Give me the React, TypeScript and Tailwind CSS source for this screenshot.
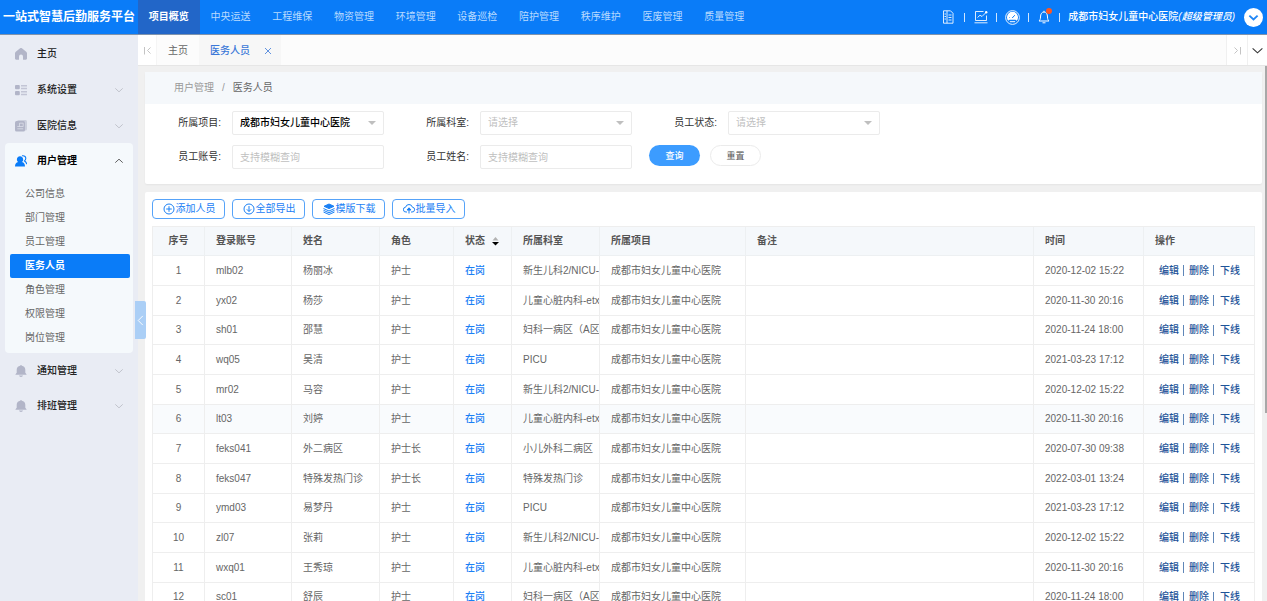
import { clsx } from "clsx";

const NAV = ["项目概览", "中央运送", "工程维保", "物资管理", "环境管理", "设备巡检", "陪护管理", "秩序维护", "医废管理", "质量管理"];
const SUB_MENU = ["公司信息", "部门管理", "员工管理", "医务人员", "角色管理", "权限管理", "岗位管理"];
const HOSPITAL = "成都市妇女儿童中心医院";
const HOVERED_ROW = 5;

const ROWS = [
  { account: "mlb02", name: "杨丽冰", role: "护士", dept: "新生儿科2/NICU-2", time: "2020-12-02 15:22" },
  { account: "yx02", name: "杨莎", role: "护士", dept: "儿童心脏内科-etxznk", time: "2020-11-30 20:16" },
  { account: "sh01", name: "邵慧", role: "护士", dept: "妇科一病区（A区）", time: "2020-11-24 18:00" },
  { account: "wq05", name: "吴清", role: "护士", dept: "PICU", time: "2021-03-23 17:12" },
  { account: "mr02", name: "马容", role: "护士", dept: "新生儿科2/NICU-2", time: "2020-12-02 15:22" },
  { account: "lt03", name: "刘婷", role: "护士", dept: "儿童心脏内科-etxznk", time: "2020-11-30 20:16" },
  { account: "feks041", name: "外二病区", role: "护士长", dept: "小儿外科二病区", time: "2020-07-30 09:38" },
  { account: "feks047", name: "特殊发热门诊", role: "护士长", dept: "特殊发热门诊", time: "2022-03-01 13:24" },
  { account: "ymd03", name: "易梦丹", role: "护士", dept: "PICU", time: "2021-03-23 17:12" },
  { account: "zl07", name: "张莉", role: "护士", dept: "新生儿科2/NICU-2", time: "2020-12-02 15:22" },
  { account: "wxq01", name: "王秀琼", role: "护士", dept: "儿童心脏内科-etxznk", time: "2020-11-30 20:16" },
  { account: "sc01", name: "舒辰", role: "护士", dept: "妇科一病区（A区）", time: "2020-11-24 18:00" },
];

function Chevron({ dir, className }: { dir: "up" | "down" | "left"; className?: string }) {
  const d = { up: "M1.5 8 6 3.8 10.5 8", down: "M1.5 4 6 8.2 10.5 4", left: "M8.5 1 3.5 6 8.5 11" }[dir];
  return (
    <svg viewBox="0 0 12 12" fill="none" stroke="currentColor" className={clsx("shrink-0", className)}>
      <path d={d} />
    </svg>
  );
}

function HomeIcon() {
  return (
    <svg viewBox="0 0 12 12" fill="currentColor" className="size-3">
      <path d="M5.1.3a1.400 1.400 0 0 1 1.800 0l4.300 3.400c.5.4.8.9.8 1.500v5.400c0 .7-.5 1.200-1.200 1.200H8V8.600a2 2 0 0 0-4 0v3.200H1.200C.5 11.800 0 11.300 0 10.600V5.200c0-.6.3-1.100.8-1.500z" />
    </svg>
  );
}

function SettingsIcon() {
  return (
    <svg viewBox="0 0 12 12" fill="currentColor" className="size-3">
      <rect y="1" width="4.8" height="4.3" rx="1" />
      <rect y="6.9" width="4.8" height="4.3" rx="1" />
      <path opacity=".7" d="M6 1h6v1.4H6zM6 3.8h6v1.4H6zM6 7h6v1.4H6zM6 9.8h6v1.4H6z" />
    </svg>
  );
}

function HospitalIcon() {
  return (
    <svg viewBox="0 0 12 12" fill="currentColor" className="size-3">
      <rect x="2" width="10" height="10.5" rx="1.5" opacity=".5" />
      <rect y="1" width="10" height="10.5" rx="1.5" />
      <path d="M4.5 3.200h3.700v3.300H2.300M4.500 3.200v3.300M2.300 8.800h5.900" stroke="#e9ecf4" strokeWidth=".6" fill="none" />
    </svg>
  );
}

function UserIcon() {
  return (
    <svg viewBox="0 0 12 12" fill="currentColor" className="size-3 text-[#0a7cf8]">
      <path d="M5 1.200c1.900 0 3.200 1.300 3.200 3.200 0 1.100-.5 2-1.200 2.600 1.900.6 3 2 3 4.500H0C0 9 1.200 7.600 3.100 7 2.400 6.400 1.900 5.500 1.900 4.400c0-1.900 1.200-3.200 3.100-3.200z" />
      <path d="M7 .8c2.200-.5 3.800.7 3.800 2.500 0 1.200-.5 2-1.300 2.600 1.200.7 2 1.800 2.300 3.300" fill="none" stroke="currentColor" strokeWidth="1.100" />
    </svg>
  );
}

function BellIcon() {
  return (
    <svg viewBox="0 0 12 12" fill="currentColor" className="size-3">
      <path d="M6 0c.5 0 .8.3.8.8 2.100.4 3.500 1.900 3.500 4v3l1.200 1.400v.6H.5v-.6l1.200-1.400v-3c0-2.100 1.400-3.600 3.500-4C5.200.3 5.500 0 6 0zM4 10.600h4c-.2.800-1 1.300-2 1.300s-1.800-.5-2-1.300z" />
    </svg>
  );
}

function MenuItem({ icon, label, arrow = true, className }: { icon: React.ReactNode; label: string; arrow?: boolean; className?: string }) {
  return (
    <button className={clsx("flex w-full items-center pl-[15px] pr-[14px] text-left font-medium text-[#222]", className)}>
      <span className="mr-[10px] text-[#b2b5c8]">{icon}</span>
      <span className="flex-1">{label}</span>
      {arrow && <Chevron dir="down" className="size-[10px] text-[#b9bcc4]" />}
    </button>
  );
}

function Sidebar() {
  return (
    <aside className="relative w-[138px] shrink-0 bg-[#e9ecf4]">
      <div className="pt-px">
        <MenuItem icon={<HomeIcon />} label="主页" arrow={false} className="h-9" />
        <MenuItem icon={<SettingsIcon />} label="系统设置" className="h-9" />
        <MenuItem icon={<HospitalIcon />} label="医院信息" className="h-[35px]" />
      </div>
      <div className="mx-[5px] rounded-sm bg-[#f5f9fc] pb-[3px]">
        <button className="flex h-[35px] w-full items-center pl-[10px] pr-[9px] text-left font-bold text-black">
          <span className="mr-[10px]"><UserIcon /></span>
          <span className="flex-1">用户管理</span>
          <Chevron dir="up" className="size-[10px] text-[#444]" />
        </button>
        <ul className="pl-[5px] pr-[3px] pt-1">
          {SUB_MENU.map((item) => (
            <li key={item}>
              <a
                href="#"
                className={clsx(
                  "flex h-6 items-center rounded-xs pl-[15px]",
                  item === "医务人员" ? "bg-[#0a7cf8] font-bold text-white" : "text-[#666]"
                )}
              >
                {item}
              </a>
            </li>
          ))}
        </ul>
      </div>
      <MenuItem icon={<BellIcon />} label="通知管理" className="h-[35px]" />
      <MenuItem icon={<BellIcon />} label="排班管理" className="h-9" />
      {/* collapse handle */}
      <button aria-label="收起菜单" className="absolute -right-2 top-[266px] z-10 flex h-[38px] w-[11px] items-center justify-center rounded-r-xs bg-[#abcff6] text-white">
        <Chevron dir="left" className="size-[11px]" />
      </button>
    </aside>
  );
}

function Header() {
  return (
    <header className="flex h-[35px] shrink-0 items-center border-b border-[#7f93ac] bg-[#0a7cf8] text-white">
      <h1 className="w-[138px] shrink-0 whitespace-nowrap text-center text-[12px] font-bold">一站式智慧后勤服务平台</h1>
      <nav className="grid h-full w-[617px] shrink-0 grid-cols-10">
        {NAV.map((item, i) => (
          <a key={item} href="#" className={clsx("flex items-center justify-center", i === 0 ? "bg-[#2266c8] font-bold" : "text-[#b8daff]")}>
            {item}
          </a>
        ))}
      </nav>
      <div className="ml-auto flex items-center whitespace-nowrap pr-1">
        <button aria-label="报表">
          <svg viewBox="0 0 12 14" fill="none" stroke="currentColor" strokeOpacity=".85" className="h-[14px] w-3">
            <path d="M1.500.8h7l2.500 2.500v9.900H1.500zM5 .8v12.400M6.500 5h3M6.500 7.500h3M6.500 10h3M2.500 4h1.500M2.500 6.500h1.500M2.500 9h1.500" />
          </svg>
        </button>
        <span className="ml-[10px] mr-[9px] h-[9px] w-px bg-white/80" />
        <button aria-label="统计">
          <svg viewBox="0 0 14 14" fill="none" stroke="currentColor" strokeOpacity=".85" className="size-[14px]">
            <path d="M9.500 1.500H1.500v9h11V5.500M.5 12.800h13" />
            <path d="M3.500 7.500 6 5.200l2 1.300L12 2.500" />
            <circle cx="12.200" cy="2.200" r="1.200" fill="currentColor" stroke="none" />
          </svg>
        </button>
        <span className="mx-2 h-[9px] w-px bg-white/80" />
        <button aria-label="仪表盘">
          <svg viewBox="0 0 15 15" fill="none" stroke="currentColor" className="size-[15px]">
            <circle cx="7.500" cy="7.500" r="6.900" strokeWidth=".9" />
            <path d="M3.200 10.800a5.500 5.500 0 1 1 8.600 0L10.500 9.800h-6z" fill="currentColor" stroke="none" />
            <path d="M4.800 11.700h5.400" />
            <path d="M7.200 8 9.800 5.200" stroke="#0a7cf8" />
            <path d="M4 7.500h1" stroke="#0a7cf8" strokeWidth=".5" />
          </svg>
        </button>
        <span className="mx-2 h-[9px] w-px bg-white/80" />
        <button aria-label="通知" className="relative">
          <svg viewBox="0 0 14 14" fill="none" stroke="currentColor" className="size-[14px]">
            <path d="M7 .8v1.200M2 11c1-1 1.500-2 1.500-4 0-3 1.300-5 3.500-5s3.500 2 3.500 5c0 2 .5 3 1.500 4zM5.500 12.800h3" />
          </svg>
          <span className="absolute -right-px -top-0.5 size-[6px] rounded-full bg-[#ff5722]" />
        </button>
        <span className="mx-2 h-[9px] w-px bg-white/80" />
        <span className="font-medium">{HOSPITAL}<em>(超级管理员)</em></span>
        <button aria-label="用户菜单" className="ml-[9px] flex size-[19px] items-center justify-center rounded-full bg-white text-[#1f86f5]">
          <Chevron dir="down" className="size-[11px] stroke-2" />
        </button>
      </div>
    </header>
  );
}

function TabBar() {
  return (
    <div className="flex h-[31px] shrink-0 items-center border-b border-[#e6e6e6] bg-[#fcfcfc] text-[#666]">
      <button aria-label="第一页" className="flex h-full w-[18px] items-center justify-center bg-white text-[#c4c4c4]">
        <svg viewBox="0 0 9 9" fill="none" stroke="currentColor" className="size-[9px]"><path d="M1.500 1v7.500M7.500 1.500l-3 3 3 3" /></svg>
      </button>
      <button className="h-full w-[43px] border-l border-[#f5f5f5] pt-px">主页</button>
      <div className="flex h-full w-[82px] items-center bg-[#f7f7f7] pl-[11px] pt-px text-[#3b78d8]">
        <button className="font-medium">医务人员</button>
        <button aria-label="关闭" className="ml-[14px]">
          <svg viewBox="0 0 8 8" fill="none" stroke="currentColor" strokeWidth=".8" className="size-2"><path d="m1 1 6 6M7 1 1 7" /></svg>
        </button>
      </div>
      <button aria-label="最后一页" className="ml-auto flex h-full w-[21px] items-center justify-center border-l border-[#f0f0f0] bg-white text-[#c4c4c4]">
        <svg viewBox="0 0 9 9" fill="none" stroke="currentColor" className="size-[9px]"><path d="M7.500 1v7.500M1.500 1.500l3 3-3 3" /></svg>
      </button>
      <button aria-label="更多标签" className="flex h-full w-5 items-center justify-center border-l border-[#f0f0f0] bg-white text-[#333]">
        <Chevron dir="down" className="size-[13px]" />
      </button>
    </div>
  );
}

const FIELD = "h-6 w-[152px] rounded-xs border border-[#ebebeb] bg-white pl-[7px] outline-none placeholder:text-[#bfbfbf]";

function SelectField({ id, label, value }: { id: string; label: string; value?: string }) {
  return (
    <div className="flex items-center gap-[11px]">
      <label htmlFor={id} className="w-[73px] text-right text-[#333]">{label}:</label>
      <div className="relative">
        <select id={id} className={clsx(FIELD, "appearance-none", value ? "font-medium text-black" : "text-[#bfbfbf]")}>
          <option>{value || "请选择"}</option>
        </select>
        <span className="pointer-events-none absolute right-2 top-[10px] border-x-4 border-t-4 border-x-transparent border-t-[#bfbfbf]" />
      </div>
    </div>
  );
}

function TextField({ id, label }: { id: string; label: string }) {
  return (
    <div className="flex items-center gap-[11px]">
      <label htmlFor={id} className="w-[73px] text-right text-[#333]">{label}:</label>
      <input id={id} placeholder="支持模糊查询" className={FIELD} />
    </div>
  );
}

function SearchCard() {
  return (
    <section className="rounded-xs bg-white pb-[15px] shadow-xs">
      <div className="flex h-8 items-center gap-2 bg-[#f5f8fb] pl-[29px] text-[#999]">
        <a href="#">用户管理</a>
        <span>/</span>
        <span className="text-[#666]">医务人员</span>
      </div>
      <form className="grid grid-cols-[236px_236px_236px] gap-x-3 gap-y-[10px] pl-[3px] pt-[7px]" onSubmit={(e) => e.preventDefault()}>
        <SelectField id="project" label="所属项目" value={HOSPITAL} />
        <SelectField id="dept" label="所属科室" />
        <SelectField id="status" label="员工状态" />
        <TextField id="account" label="员工账号" />
        <TextField id="name" label="员工姓名" />
        <div className="flex items-start gap-[10px] pl-[5px]">
          <button type="submit" className="h-[21px] w-[51px] rounded-full bg-[#3c9cff] text-[9px] font-medium text-white">查询</button>
          <button type="reset" className="h-[21px] w-[51px] rounded-full border border-[#ebebeb] bg-white text-[9px] text-[#555]">重置</button>
        </div>
      </form>
    </section>
  );
}

const TOOLS = [
  { label: "添加人员", icon: <><circle cx="6" cy="6" r="5" /><path d="M6 3.200v5.600M3.200 6h5.600" /></> },
  { label: "全部导出", icon: <><circle cx="6" cy="6" r="5" /><path d="M6 3v5.500M3.800 6.300 6 8.500l2.200-2.200" /></> },
  {
    label: "模版下载",
    icon: (
      <>
        <path d="M6 1 11 3.300 6 5.600 1 3.300z" fill="currentColor" />
        <path d="M.5 5.500 6 8l5.500-2.500M.5 7.300 6 9.800l5.500-2.500M.5 9 6 11.500 11.500 9" />
      </>
    ),
  },
  {
    label: "批量导入",
    icon: (
      <>
        <path d="M4 9H3a2.400 2.400 0 0 1-.4-4.800A3.500 3.500 0 0 1 9.400 4.200 2.400 2.400 0 0 1 9 9H8" />
        <path d="M6 10.500V5M4 7l2-2.200L8 7z" fill="currentColor" />
      </>
    ),
  },
];

const TH = "overflow-hidden whitespace-nowrap border-b border-r border-[#edf0f2] p-0 pl-[11px] text-left font-bold";
const TD = "overflow-hidden whitespace-nowrap border-b border-r border-[#eee] p-0 pl-[11px]";

function StaffTable() {
  return (
    <section className="rounded-xs bg-white px-[7px] pt-[7px]">
      <div className="flex gap-[7px]">
        {TOOLS.map((tool) => (
          <button key={tool.label} className="flex h-5 w-[73px] items-center justify-center gap-px rounded-sm border border-[#56a3f9] pl-px text-[#1a80f5]">
            <svg viewBox="0 0 12 12" fill="none" stroke="currentColor" className="size-3">{tool.icon}</svg>
            {tool.label}
          </button>
        ))}
      </div>
      <table className="mt-[7px] w-full table-fixed border-separate border-spacing-0 border-l border-t border-[#eee] text-[#666]">
        <colgroup>
          <col className="w-[52px]" />
          <col className="w-[87px]" />
          <col className="w-[88px]" />
          <col className="w-[74px]" />
          <col className="w-[58px]" />
          <col className="w-[88px]" />
          <col className="w-[146px]" />
          <col />
          <col className="w-[110px]" />
          <col className="w-[111px]" />
        </colgroup>
        <thead className="bg-[#f5f8fb] text-[#555]">
          <tr className="h-[29px]">
            <th className="border-b border-r border-[#edf0f2] p-0 text-center font-bold">序号</th>
            <th className={TH}>登录账号</th>
            <th className={TH}>姓名</th>
            <th className={TH}>角色</th>
            <th className={TH}>
              <button className="flex items-center gap-[7px]">
                状态
                <svg viewBox="0 0 7 9" className="h-[9px] w-[7px]">
                  <path d="M3.500 0 6.500 3.500h-6z" fill="#b2b2b2" />
                  <path d="M3.500 8.500 7 5H0z" fill="#000" />
                </svg>
              </button>
            </th>
            <th className={TH}>所属科室</th>
            <th className={TH}>所属项目</th>
            <th className={TH}>备注</th>
            <th className={TH}>时间</th>
            <th className={TH}>操作</th>
          </tr>
        </thead>
        <tbody>
          {ROWS.map((row, i) => (
            <tr key={row.account} className={clsx("h-[30px] nth-[3n]:h-[29px]", i === HOVERED_ROW && "bg-[#f9fbfd]")}>
              <td className="border-b border-r border-[#eee] p-0 text-center">{i + 1}</td>
              <td className={TD}>{row.account}</td>
              <td className={TD}>{row.name}</td>
              <td className={TD}>{row.role}</td>
              <td className={clsx(TD, "font-medium text-[#1a80f5]")}>在岗</td>
              <td className={TD}>{row.dept}</td>
              <td className={TD}>{HOSPITAL}</td>
              <td className={TD}></td>
              <td className={TD}>{row.time}</td>
              <td className={TD}>
                <div className="flex items-center pl-1 font-medium text-[#1e5499]">
                  <a href="#">编辑</a>
                  <span className="ml-1 mr-[5px] h-[11px] w-px bg-[#5f86b8]" />
                  <a href="#">删除</a>
                  <span className="ml-1 mr-[6px] h-[11px] w-px bg-[#5f86b8]" />
                  <a href="#">下线</a>
                </div>
              </td>
            </tr>
          ))}
        </tbody>
      </table>
    </section>
  );
}

export default function App() {
  return (
    <div className="flex h-screen flex-col overflow-hidden bg-[#f0f0f0] font-['Liberation_Sans','Noto_Sans_CJK_SC',sans-serif] text-[10px] leading-4">
      <Header />
      <div className="flex min-h-0 flex-1">
        <Sidebar />
        <div className="flex min-w-0 flex-1 flex-col">
          <TabBar />
          <main className="relative flex min-h-0 flex-1 flex-col gap-2 overflow-hidden pl-[7px] pr-[5px] pt-[6px]">
            <SearchCard />
            <StaffTable />
            {/* scroll thumb */}
            <div className="absolute right-0 top-0 h-[347px] w-0.5 bg-[#a8a8a8]" />
          </main>
        </div>
      </div>
    </div>
  );
}
